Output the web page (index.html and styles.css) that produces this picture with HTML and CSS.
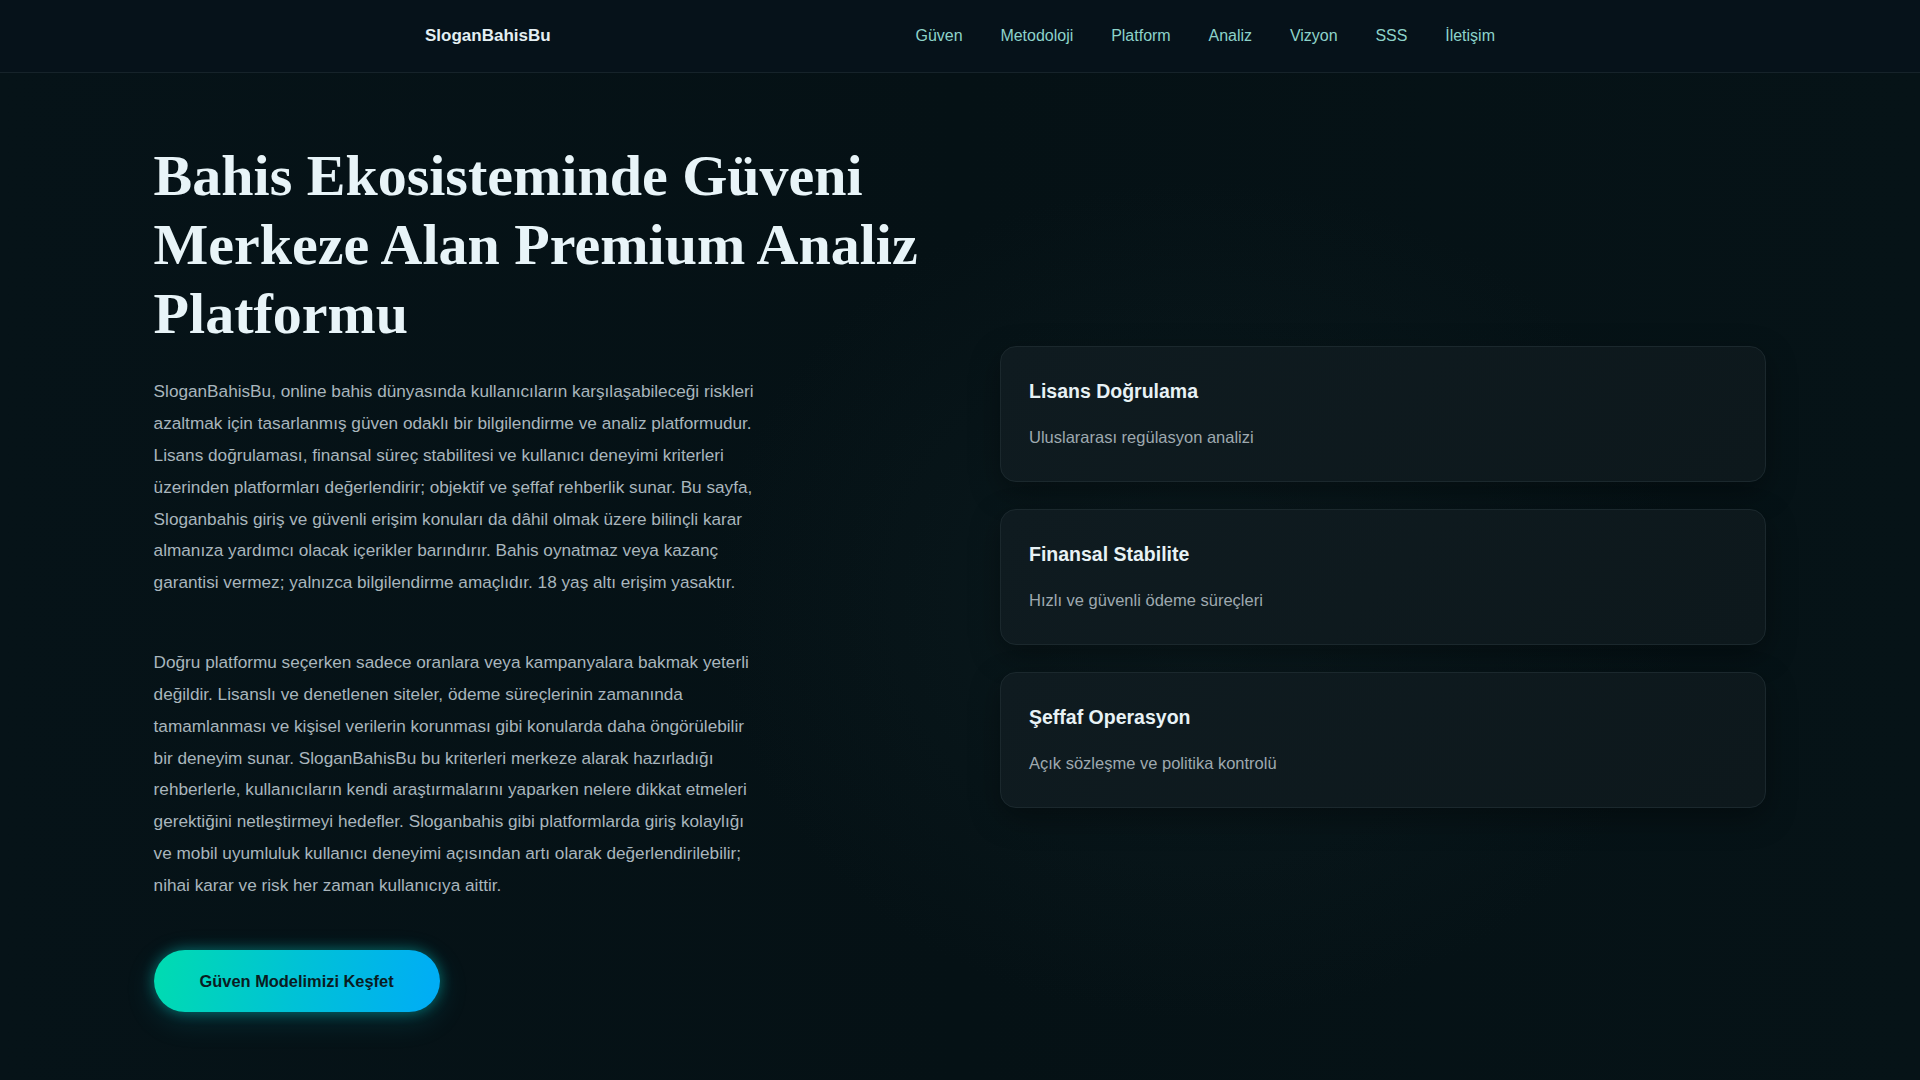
FILE: index.html
```html
<!DOCTYPE html>
<html lang="tr">
<head>
<meta charset="utf-8">
<title>SloganBahisBu</title>
<link rel="stylesheet" href="styles.css">
</head>
<body>
<header class="site-header">
  <div class="header-inner">
    <div class="logo">SloganBahisBu</div>
    <nav class="nav">
      <a href="#">Güven</a>
      <a href="#">Metodoloji</a>
      <a href="#">Platform</a>
      <a href="#">Analiz</a>
      <a href="#">Vizyon</a>
      <a href="#">SSS</a>
      <a href="#">İletişim</a>
    </nav>
  </div>
</header>
<main class="hero">
  <div class="hero-left">
    <h1 class="hero-title">Bahis Ekosisteminde Güveni Merkeze Alan Premium Analiz Platformu</h1>
    <p class="hero-text first">SloganBahisBu, online bahis dünyasında kullanıcıların karşılaşabileceği riskleri azaltmak için tasarlanmış güven odaklı bir bilgilendirme ve analiz platformudur. Lisans doğrulaması, finansal süreç stabilitesi ve kullanıcı deneyimi kriterleri üzerinden platformları değerlendirir; objektif ve şeffaf rehberlik sunar. Bu sayfa, Sloganbahis giriş ve güvenli erişim konuları da dâhil olmak üzere bilinçli karar almanıza yardımcı olacak içerikler barındırır. Bahis oynatmaz veya kazanç garantisi vermez; yalnızca bilgilendirme amaçlıdır. 18 yaş altı erişim yasaktır.</p>
    <p class="hero-text second">Doğru platformu seçerken sadece oranlara veya kampanyalara bakmak yeterli değildir. Lisanslı ve denetlenen siteler, ödeme süreçlerinin zamanında tamamlanması ve kişisel verilerin korunması gibi konularda daha öngörülebilir bir deneyim sunar. SloganBahisBu bu kriterleri merkeze alarak hazırladığı rehberlerle, kullanıcıların kendi araştırmalarını yaparken nelere dikkat etmeleri gerektiğini netleştirmeyi hedefler. Sloganbahis gibi platformlarda giriş kolaylığı ve mobil uyumluluk kullanıcı deneyimi açısından artı olarak değerlendirilebilir; nihai karar ve risk her zaman kullanıcıya aittir.</p>
    <a class="cta" href="#">Güven Modelimizi Keşfet</a>
  </div>
  <div class="hero-right">
    <div class="card">
      <h3 class="card-title">Lisans Doğrulama</h3>
      <p class="card-text">Uluslararası regülasyon analizi</p>
    </div>
    <div class="card">
      <h3 class="card-title">Finansal Stabilite</h3>
      <p class="card-text">Hızlı ve güvenli ödeme süreçleri</p>
    </div>
    <div class="card">
      <h3 class="card-title">Şeffaf Operasyon</h3>
      <p class="card-text">Açık sözleşme ve politika kontrolü</p>
    </div>
  </div>
</main>
</body>
</html>
```
FILE: styles.css
```css
* { box-sizing: border-box; }
html, body { margin: 0; padding: 0; }
body {
  font-family: "Liberation Sans", Arial, sans-serif;
  background-color: #051217;
  background-image:
    radial-gradient(ellipse 700px 600px at 1200px 600px, rgba(20, 40, 44, 0.35), transparent 70%),
    linear-gradient(90deg, #061318 0%, #051115 50%, #061317 100%);
  color: #e6f1f5;
  min-height: 1080px;
  overflow: hidden;
}
.site-header {
  height: 73px;
  background: #06121a;
  border-bottom: 1px solid #16232a;
}
.header-inner {
  width: 1070px;
  height: 72px;
  margin: 0 auto;
  display: flex;
  align-items: center;
  justify-content: space-between;
}
.logo {
  font-weight: 700;
  font-size: 17px;
  color: #e4eff3;
}
.nav {
  display: flex;
  gap: 37.8px;
}
.nav a {
  color: #8dd3ca;
  text-decoration: none;
  font-size: 16px;
}
.hero {
  height: 1007px;
  padding: 0 8%;
  display: grid;
  grid-template-columns: 1fr 1fr;
  column-gap: 80px;
  align-items: center;
}
.hero-left { display: flex; flex-direction: column; align-items: flex-start; }
.hero-title {
  font-family: "Liberation Serif", "Times New Roman", serif;
  font-weight: 700;
  font-size: 58px;
  line-height: 69px;
  color: #e8f4f8;
  margin: 0 0 28px 0;
}
.hero-text {
  font-size: 17.2px;
  line-height: 31.85px;
  color: #a9b6bd;
  max-width: 610px;
  margin: 0;
}
.hero-text.first { margin-bottom: 48px; }
.hero-text.second { margin-bottom: 48px; }
.cta {
  display: inline-block;
  padding: 21px 46px;
  line-height: 20px;
  font-size: 16.4px;
  font-weight: 700;
  color: #0a1c22;
  text-decoration: none;
  border-radius: 40px;
  background: linear-gradient(100deg, #00dcb0 0%, #00c2d6 50%, #00acf7 100%);
  box-shadow: 0 0 14px rgba(0, 210, 200, 0.45), 0 8px 30px rgba(0, 180, 200, 0.18);
}
.hero-right {
  display: flex;
  flex-direction: column;
  gap: 27px;
}
.card {
  border: 1px solid #1b282d;
  border-radius: 16px;
  background: linear-gradient(135deg, #0f1b20 0%, #0d181c 100%);
  padding: 31px 28px;
  box-shadow: 0 10px 30px rgba(0, 0, 0, 0.35);
}
.card-title {
  margin: 0 0 19px 0;
  font-size: 19.5px;
  line-height: 27px;
  font-weight: 700;
  color: #e8f2f5;
}
.card-text {
  margin: 0;
  font-size: 16.5px;
  line-height: 26px;
  color: #9ea9af;
}
```
